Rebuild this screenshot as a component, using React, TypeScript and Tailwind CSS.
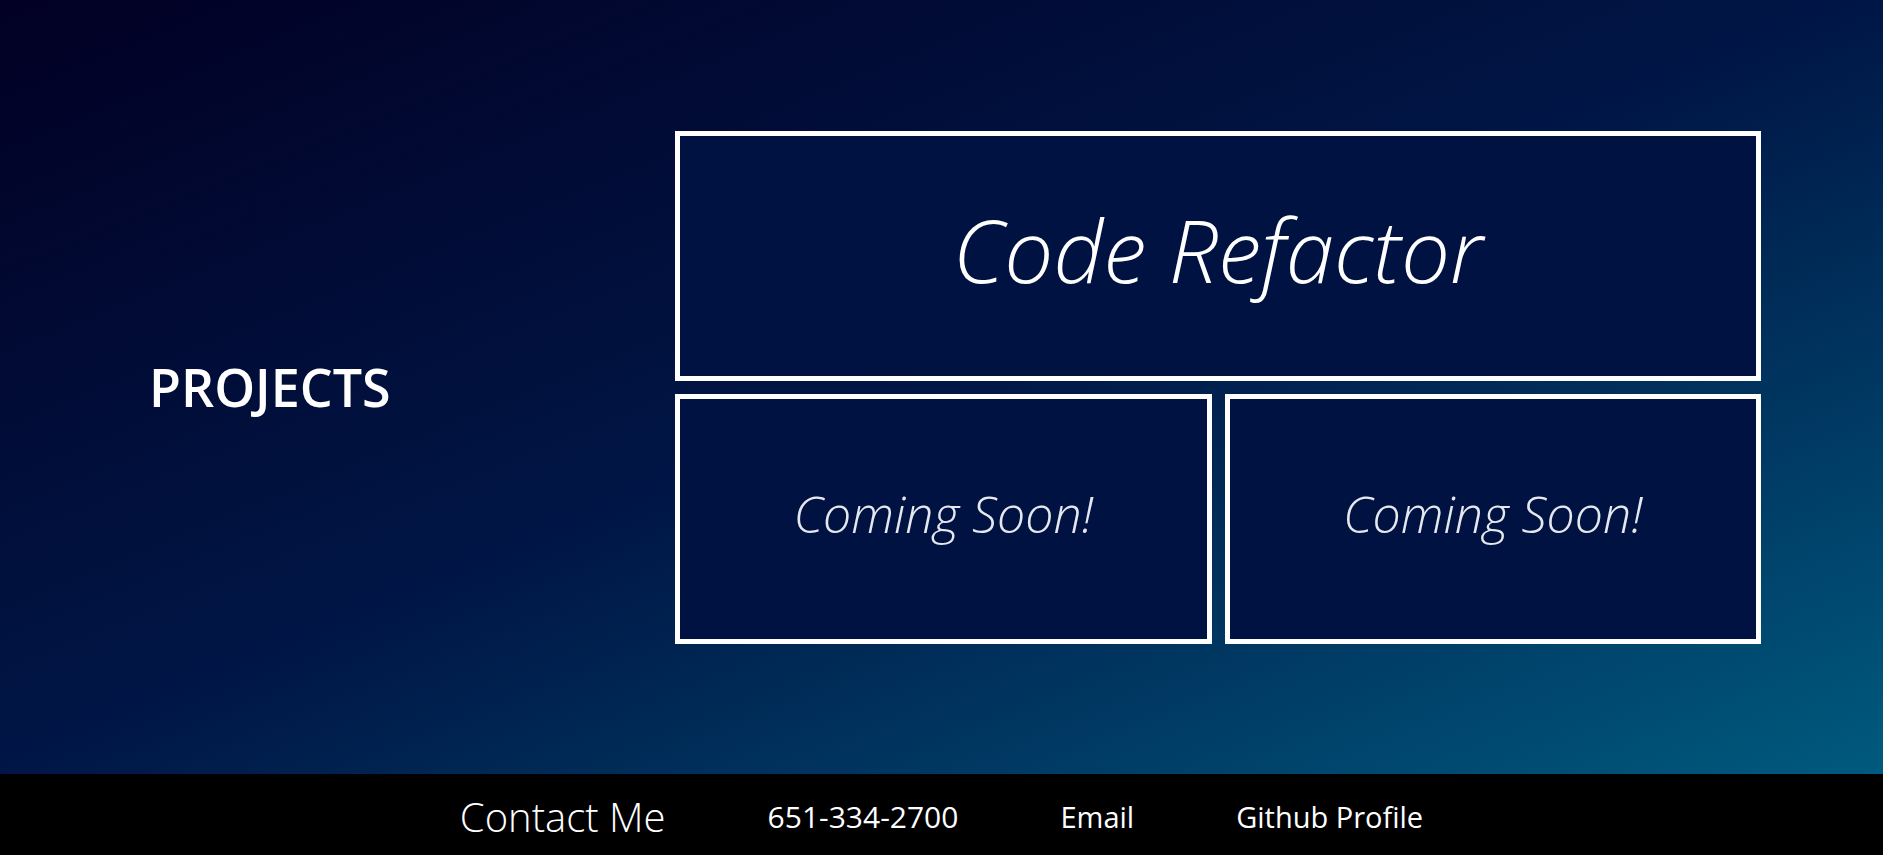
import React from 'react';

const projects = [
  { title: 'Coming Soon!' },
  { title: 'Coming Soon!' },
];

export default function App() {
  return (
    <div className="min-h-screen flex flex-col font-['Open_Sans',sans-serif] text-white">
      <main className="h-[774px] flex items-center bg-[linear-gradient(to_bottom_right,#020024_0%,#001646_50%,#005a7e_100%)]">
        <div className="w-[675px] pl-[149px]">
          <h1 className="text-[52px] font-semibold leading-none tracking-normal">PROJECTS</h1>
        </div>

        <div className="w-[1086px] flex flex-col gap-[13px]">
          <a className="h-[250px] border-[5px] border-white bg-[#001241] flex items-center justify-center">
            <span className="text-[87px] font-light italic leading-none pb-3">Code Refactor</span>
          </a>
          <div className="grid grid-cols-2 gap-[13px]">
            {projects.map((p, i) => (
              <a key={i} className="h-[250px] border-[5px] border-white bg-[#001241] flex items-center justify-center">
                <span className="text-[50px] font-light italic leading-none pb-[10px] text-[#e6e8ef]">{p.title}</span>
              </a>
            ))}
          </div>
        </div>
      </main>

      <footer className="h-[81px] bg-black flex items-center justify-center gap-[102px] pt-[4px]">
        <h2 className="text-[40px] font-light leading-none">Contact Me</h2>
        <span className="text-[30px] leading-none">651-334-2700</span>
        <a className="text-[29px] leading-none">Email</a>
        <a className="text-[29px] leading-none">Github Profile</a>
      </footer>
    </div>
  );
}
